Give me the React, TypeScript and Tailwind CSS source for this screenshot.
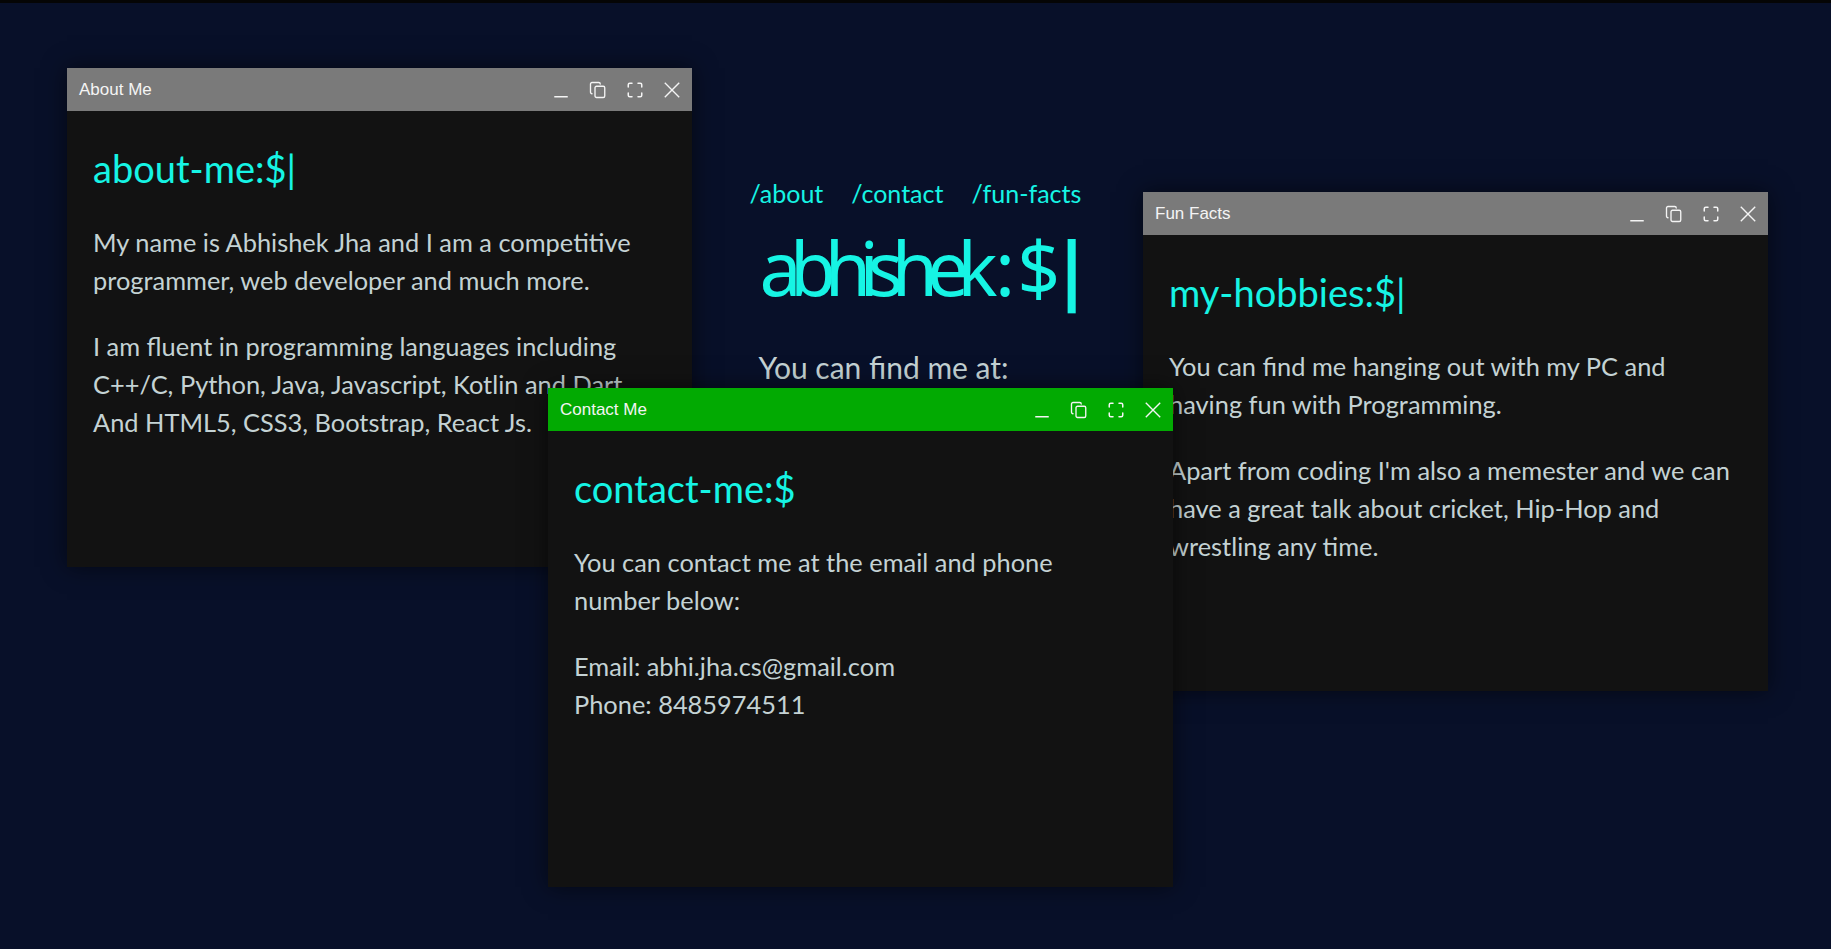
import React from "react";

const MinIcon = () => (
  <svg width="18" height="18" viewBox="0 0 24 24" fill="none" stroke="currentColor" strokeWidth="2">
    <line x1="3" y1="21" x2="21" y2="21" />
  </svg>
);
const RestoreIcon = () => (
  <svg width="18" height="18" viewBox="0 0 24 24" fill="none" stroke="currentColor" strokeWidth="1.8" strokeLinecap="round" strokeLinejoin="round">
    <rect width="13" height="15" x="8" y="7" rx="2" ry="2" />
    <path d="M4 17c-1.1 0-2-.9-2-2V4c0-1.1.9-2 2-2h9c1.1 0 2 .9 2 2" />
  </svg>
);
const MaxIcon = () => (
  <svg width="18" height="18" viewBox="0 0 24 24" fill="none" stroke="currentColor" strokeWidth="2" strokeLinecap="round" strokeLinejoin="round">
    <path d="M8 3H5a2 2 0 0 0-2 2v3" />
    <path d="M21 8V5a2 2 0 0 0-2-2h-3" />
    <path d="M3 16v3a2 2 0 0 0 2 2h3" />
    <path d="M16 21h3a2 2 0 0 0 2-2v-3" />
  </svg>
);
const CloseIcon = () => (
  <svg width="18" height="18" viewBox="0 0 24 24" fill="none" stroke="currentColor" strokeWidth="1.8" strokeLinecap="square">
    <path d="M3 3 21 21" />
    <path d="M21 3 3 21" />
  </svg>
);

function Window({
  title,
  bar,
  pos,
  heading,
  children,
}: {
  title: string;
  bar: string;
  pos: string;
  heading: React.ReactNode;
  children: React.ReactNode;
}) {
  return (
    <div className={`absolute ${pos} w-[625px] h-[499px] bg-[#121212] shadow-[0_0_22px_rgba(0,0,0,0.55)] flex flex-col`}>
      <div className={`${bar} h-[43px] flex items-center justify-between pl-[12px] pr-[11px] text-[#f4f4f4]`}>
        <span className="text-[17px] font-['Liberation_Sans',Arial,sans-serif]">{title}</span>
        <div className="flex items-center gap-[19px]">
          <MinIcon />
          <RestoreIcon />
          <MaxIcon />
          <CloseIcon />
        </div>
      </div>
      <div className="pt-[24px] px-[26px] font-['Lato',sans-serif]">
        <h2 className="text-[38px] leading-[66px] text-[#16f4e4]">{heading}</h2>
        <div className="mt-[22px] text-[25.4px] leading-[38px] text-[#c4d2d4] flex flex-col gap-[28px]">
          {children}
        </div>
      </div>
    </div>
  );
}

export default function App() {
  return (
    <div className="relative w-full h-[949px] overflow-hidden bg-[#081029] border-t-[3px] border-[#050505]">
      <div className="mx-auto w-[332px] pt-[174px] font-['Lato',sans-serif]">
        <nav className="flex gap-[28px] whitespace-nowrap text-[25px] leading-[32px] text-[#16f4e4]">
          <span>/about</span>
          <span>/contact</span>
          <span>/fun-facts</span>
        </nav>
        <h1 className="mt-[13px] pl-[10px] leading-[90px] text-[#16f4e4] font-['Noto_Sans',sans-serif] text-[75px] whitespace-nowrap">
          <span className="tracking-[-11.5px]">abhishek</span>
          <span className="ml-[9px]">:</span>
          <span className="ml-[2px] tracking-[-10px]">$</span>
          <span className="ml-[1px] font-bold">|</span>
        </h1>
        <p className="mt-[37px] pl-[9px] text-[30px] leading-[36px] text-[#c4d2d4] whitespace-nowrap">You can find me at:</p>
      </div>

      <Window
        title="About Me"
        bar="bg-[#7a7a7a]"
        pos="left-[67px] top-[65px] z-10"
        heading={<>about-me:$|</>}
      >
        <p>
          My name is Abhishek Jha and I am a competitive
          <br />
          programmer, web developer and much more.
        </p>
        <p>
          I am fluent in programming languages including
          <br />
          C++/C, Python, Java, Javascript, Kotlin and Dart
          <br />
          And HTML5, CSS3, Bootstrap, React Js.
        </p>
      </Window>

      <Window
        title="Fun Facts"
        bar="bg-[#7a7a7a]"
        pos="left-[1143px] top-[189px] z-20"
        heading={<>my-hobbies:$|</>}
      >
        <p>
          You can find me hanging out with my PC and
          <br />
          having fun with Programming.
        </p>
        <p>
          Apart from coding I'm also a memester and we can
          <br />
          have a great talk about cricket, Hip-Hop and
          <br />
          wrestling any time.
        </p>
      </Window>

      <Window
        title="Contact Me"
        bar="bg-[#02aa02]"
        pos="left-[548px] top-[385px] z-30"
        heading={<>contact-me:$</>}
      >
        <p>
          You can contact me at the email and phone
          <br />
          number below:
        </p>
        <p>
          Email: abhi.jha.cs@gmail.com
          <br />
          Phone: 8485974511
        </p>
      </Window>
    </div>
  );
}
